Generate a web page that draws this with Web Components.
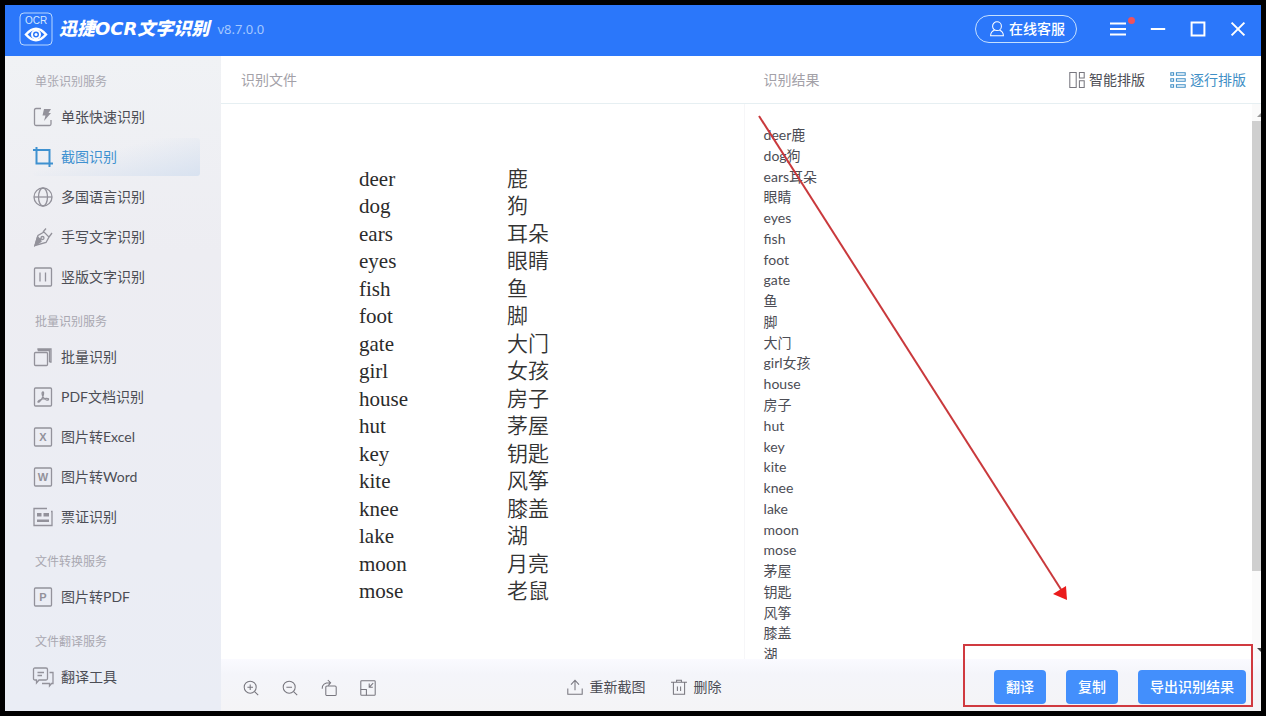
<!DOCTYPE html>
<html lang="zh-CN">
<head>
<meta charset="utf-8">
<title>迅捷OCR文字识别</title>
<style>
body {
  background: #000;
  box-sizing: border-box;
  color: #4c4d55;
  display: flex;
  font: 14px/20px Lato, "Noto Sans CJK SC", sans-serif;
  height: 100vh;
  margin: 0;
  padding: 5px;
}
</style>
</head>
<body>
<ocr-app>
  <ocr-titlebar slot="title" version="v8.7.0.0">迅捷OCR文字识别</ocr-titlebar>
  <ocr-sidebar slot="side">
    <nav-group label="单张识别服务">
      <nav-item icon="quick">单张快速识别</nav-item>
      <nav-item icon="crop" active>截图识别</nav-item>
      <nav-item icon="globe">多国语言识别</nav-item>
      <nav-item icon="pen">手写文字识别</nav-item>
      <nav-item icon="vertical">竖版文字识别</nav-item>
    </nav-group>
    <nav-group label="批量识别服务">
      <nav-item icon="batch">批量识别</nav-item>
      <nav-item icon="pdf">PDF文档识别</nav-item>
      <nav-item icon="excel">图片转Excel</nav-item>
      <nav-item icon="word">图片转Word</nav-item>
      <nav-item icon="ticket">票证识别</nav-item>
    </nav-group>
    <nav-group label="文件转换服务">
      <nav-item icon="topdf">图片转PDF</nav-item>
    </nav-group>
    <nav-group label="文件翻译服务">
      <nav-item icon="translate">翻译工具</nav-item>
    </nav-group>
  </ocr-sidebar>
  <ocr-panel heading="识别文件">
    <word-sheet></word-sheet>
    <tool-button slot="foot" icon="zoomin" label="放大"></tool-button>
    <tool-button slot="foot" icon="zoomout" label="缩小"></tool-button>
    <tool-button slot="foot" icon="rotate" label="旋转"></tool-button>
    <tool-button slot="foot" icon="fit" label="适应窗口"></tool-button>
    <tool-button slot="actions" icon="upload">重新截图</tool-button>
    <tool-button slot="actions" icon="trash">删除</tool-button>
  </ocr-panel>
  <ocr-panel heading="识别结果" divided>
    <tool-button slot="tools" icon="smart" tight>智能排版</tool-button>
    <tool-button slot="tools" icon="rows" tight active>逐行排版</tool-button>
    <result-list></result-list>
    <result-actions slot="actions"></result-actions>
    <hint-arrow slot="over"></hint-arrow>
  </ocr-panel>
</ocr-app>

<script>
const html = (strings, ...parts) => new DOMParser().parseFromString(
	parts.reduce((tpl, value, i) => `${tpl}${strings[i]}${value}`, '')
		.concat(strings[parts.length]), 'text/html').querySelector('template')

class Base extends HTMLElement {
	constructor(tpl) {
		super()
		this.attachShadow({mode: 'open'})
		this.shadowRoot.append(tpl.content.cloneNode(true))
	}
	$(sel) { return this.shadowRoot.querySelector(sel) }
}

// every icon is drawn on a 20x20 grid
const page = '<rect x="1.5" y="1" width="17" height="18" rx="1"/>'
const letter = ch => `${page}<text x="10" y="14" text-anchor="middle" font-family="Liberation Sans" font-size="11" font-weight="bold" fill="currentColor" stroke="none">${ch}</text>`
const icons = {
	quick: '<path d="M8 1.500H3Q1.500 1.500 1.500 3v14q0 1.500 1.500 1.500h13.500q1.500 0 1.500-1.500v-4"/><path d="M11 2h7l-2.500 4H18l-7 8 1.500-5.500H9.500z" fill="currentColor" stroke="none"/>',
	crop: '<g stroke-width="2"><path d="M0 3h16.500v17M3.500 0v16.500H20"/></g>',
	globe: '<circle cx="10" cy="10" r="9"/><ellipse cx="10" cy="10" rx="4.500" ry="9"/><path d="M1 10h18"/>',
	pen: '<path d="M2 18.500 5 8.500l6-3.500 5 5-3 5.500zM10 5l3-3.500M16 10l3-4M2 18.500l6-7"/><path d="M2 18.500 4.500 10l3 2.500.5 2z" fill="currentColor"/><circle cx="9.500" cy="11" r="1.500"/>',
	vertical: `${page}<path d="M7 5.500v9M12.500 5.500v9"/>`,
	batch: '<rect x="1.500" y="5.500" width="13" height="13" rx="1"/><path d="M5 3.500V2h13v13h-1.500M5 3.500h11.500V15"/>',
	pdf: `${page}<path d="M10 5c-1.500 0-1 3 .5 5.500S15 14 15.500 12.500s-3-1.500-6-.5-5 2-4.500 3 3.500-2 4.500-4.500S11 5 10 5z"/>`,
	excel: letter('X'),
	word: letter('W'),
	topdf: letter('P'),
	ticket: '<path d="M14 1.500H1v17h18V4.500h-1"/><path d="M4 6h4.500v3.500H4zM10.500 6H16v3.500h-5.500zM4 12.500h12V15H4z" fill="currentColor" stroke="none"/>',
	translate: '<path d="M2 1h11q1.500 0 1.500 1.500v9q0 1.500-1.500 1.500H6l-2.500 3v-3H2Q.500 13 .500 11.500v-9Q.500 1 2 1zM4.500 5.500H11M4.500 8.500H9M16.500 5.500H20v11h-1.500l-2 2.500v-2.500H9"/>',
	zoomin: '<circle cx="9" cy="9" r="7.500"/><path d="M14.500 14.500 19 19M9 5.500v7M5.500 9h7"/>',
	zoomout: '<circle cx="9" cy="9" r="7.500"/><path d="M14.500 14.500 19 19M5.500 9h7"/>',
	rotate: '<rect x="6" y="7.500" width="13" height="12" rx="1.500"/><path d="M1.500 11Q1 3 12 3.500M8.500 0 12 3.500 9 7"/>',
	fit: '<rect x="1" y="1" width="18" height="18" rx="1"/><path d="M1 12h7v7M16.500 4 12 8.500M11.500 4.500v4.500H16"/>',
	upload: '<path d="M1 12v7h18v-7M10 14V2M5 7l5-5.500L15 7"/>',
	trash: '<path d="M0 4h20M7 4V1.500h6V4M3 4v15h14V4M8 9.500V15M12 9.500V15"/>',
	smart: '<path d="M1 .5h8v19H1zM13 .5h6v7h-6zM13 11h6v8.500h-6z"/>',
	rows: '<path d="M1 1h3.500v3H1zM1 8.500h3.500v3H1zM1 16h3.500v3H1zM8 1h11v3H8zM8 8.500h11v3H8zM8 16h11v3H8z"/>',
	user: '<circle cx="10" cy="6.500" r="5.500"/><path d="M7 11.500Q2 13 2 18.500h16q0-5.500-5-7"/>',
	menu: '<path d="M0 3h20M0 10h20M0 17h20" stroke-width="2.500"/>',
	min: '<path d="M1 10h18" stroke-width="2.500"/>',
	max: '<path d="M2 2h16v16H2z" stroke-width="2.500"/>',
	close: '<path d="M2 2l16 16M18 2 2 18" stroke-width="2.500"/>'
}

const iconTpl = html`<template>
<style>
:host { display: block; flex: none; height: 16px; width: 16px; }
svg { display: block; fill: none; height: 100%; overflow: visible; stroke: currentColor; stroke-width: 1.300; width: 100%; }
</style>
<svg viewBox="0 0 20 20" aria-hidden="true"></svg>
</template>`
customElements.define('ui-icon', class extends Base {
	static get observedAttributes() { return ['name'] }

	constructor() { super(iconTpl) }
	attributeChangedCallback(attr, old, name) {
		this.$('svg').innerHTML = icons[name] || ''
	}
})

const appTpl = html`<template>
<style>
:host {
  background: #fff;
  display: grid;
  flex: 1;
  grid-template: 51px minmax(0, 1fr) / 216px 101fr 100fr;
  min-width: 0;
  overflow: hidden;
}
slot[name=title]::slotted(*) { grid-column: 1 / -1; }
</style>
<slot name="title"></slot><slot name="side"></slot><slot></slot>
</template>`
customElements.define('ocr-app', class extends Base {
	constructor() { super(appTpl) }
})

const titleTpl = html`<template>
<style>
:host {
  align-items: center;
  background: #2b77fa;
  color: #fff;
  display: flex;
  padding: 0 15px 3px 14px;
}
.logo { flex: none; height: 34px; width: 34px; }
h1 {
  font: italic 900 18px/24px "DejaVu Sans", "Noto Sans CJK SC", sans-serif;
  margin: 0 8px 0 6px;
  white-space: nowrap;
}
.ver { color: #a4c8ff; flex: 1; font: 13px/20px "Noto Sans", sans-serif; }
button { background: none; border: 0; color: inherit; font: inherit; padding: 0; }
.service {
  align-items: center;
  border: 1px solid #c5e0ff;
  border-radius: 14px;
  display: flex;
  font-weight: 500;
  gap: 4px;
  height: 28px;
  margin-right: 33px;
  padding: 0 11px 0 13px;
}
.win { display: flex; gap: 24px; }
.win button { position: relative; }
.dot { background: #f0525c; border-radius: 50%; height: 7px; position: absolute; right: -9px; top: -4px; width: 7px; }
</style>
<svg class="logo" viewBox="0 0 34 34" fill="none" stroke="#fff" aria-hidden="true">
  <rect x="1" y="1" width="32" height="32" rx="4" stroke="#b9d8ff"/>
  <text x="17" y="12" text-anchor="middle" font-family="Liberation Sans" font-size="10" fill="#d4e7ff" stroke="none">OCR</text>
  <path d="M7 22.500Q17 11 27 22.500 17 34 7 22.500z" stroke-width="2.500"/>
  <circle cx="17" cy="22.500" r="4" stroke-width="2"/>
  <circle cx="17" cy="22.500" r="1.500" fill="#fff" stroke="none"/>
</svg>
<h1><slot></slot></h1>
<span class="ver"></span>
<button class="service"><ui-icon name="user"></ui-icon>在线客服</button>
<div class="win">
  <button aria-label="菜单"><ui-icon name="menu"></ui-icon><i class="dot"></i></button>
  <button aria-label="最小化"><ui-icon name="min"></ui-icon></button>
  <button aria-label="最大化"><ui-icon name="max"></ui-icon></button>
  <button aria-label="关闭"><ui-icon name="close"></ui-icon></button>
</div>
</template>`
customElements.define('ocr-titlebar', class extends Base {
	constructor() { super(titleTpl) }
	connectedCallback() {
		this.$('.ver').textContent = this.getAttribute('version')
	}
})

const sideTpl = html`<template>
<style>
:host {
  background: linear-gradient(to bottom, #f0f2f5, #ededf2 30%, #eaedf5);
  display: block;
  padding: 2px 21px 0 28px;
}
</style>
<nav><slot></slot></nav>
</template>`
customElements.define('ocr-sidebar', class extends Base {
	constructor() { super(sideTpl) }
})

const groupTpl = html`<template>
<style>
:host { display: block; }
h2 { color: #a9a8b1; font: inherit; font-size: 12px; line-height: 32px; margin: 0; padding: 8px 0 0 2px; }
</style>
<h2></h2>
<slot></slot>
</template>`
customElements.define('nav-group', class extends Base {
	constructor() { super(groupTpl) }
	connectedCallback() {
		this.$('h2').textContent = this.getAttribute('label')
	}
})

const itemTpl = html`<template>
<style>
:host { color: #4c4d55; display: block; height: 40px; }
a {
  align-items: center;
  color: inherit;
  display: flex;
  gap: 8px;
  height: 38px;
  text-decoration: none;
}
ui-icon { color: #93929b; height: 20px; width: 20px; }
:host([active]) { color: #3f91d0; }
:host([active]) a { background: linear-gradient(165deg, #edeff400 40%, #d8e2f0); border-radius: 3px; }
:host([active]) ui-icon { color: inherit; }
</style>
<a href="#"><ui-icon></ui-icon><span><slot></slot></span></a>
</template>`
customElements.define('nav-item', class extends Base {
	constructor() {
		super(itemTpl)
		this.$('ui-icon').setAttribute('name', this.getAttribute('icon'))
	}
})

const panelTpl = html`<template>
<style>
:host {
  display: grid;
  grid-template-rows: 48px minmax(0, 1fr) 52px;
  min-width: 0;
  position: relative;
}
header, footer { align-items: center; display: flex; }
header { border-bottom: 1px solid #e6eff2; padding: 0 15px 0 20px; }
h2 { color: #a3a1a8; flex: 1; font: inherit; margin: 0; }
.tools { display: flex; gap: 25px; }
footer { background: linear-gradient(to bottom, #fafaff, #f4f5fa 30%, #f4f4f6); padding: 4px 15px 0 22px; }
.foot { display: flex; flex: 1; gap: 23px; }
.actions { display: flex; gap: 25px; }
:host(:not([divided])) footer { padding-right: 22px; }
:host([divided]) main { box-shadow: inset 1px 0 #f6f6f8; }
</style>
<header><h2></h2><div class="tools"><slot name="tools"></slot></div></header>
<main><slot></slot></main>
<footer><div class="foot"><slot name="foot"></slot></div><div class="actions"><slot name="actions"></slot></div></footer>
<slot name="over"></slot>
</template>`
customElements.define('ocr-panel', class extends Base {
	constructor() { super(panelTpl) }
	connectedCallback() {
		this.$('h2').textContent = this.getAttribute('heading')
	}
})

const toolTpl = html`<template>
<style>
:host { color: #4c4d55; display: block; }
button {
  align-items: center;
  background: none;
  border: 0;
  color: inherit;
  display: flex;
  font: inherit;
  gap: 7px;
  padding: 0;
}
ui-icon { color: #77767e; }
:host([tight]) button { gap: 4px; }
:host([active]), :host([active]) ui-icon { color: #3f8fc6; }
:host([label]) button { height: 22px; padding-top: 2px; }
:host([label]) button span { display: none; }
</style>
<button><ui-icon></ui-icon><span><slot></slot></span></button>
</template>`
customElements.define('tool-button', class extends Base {
	constructor() {
		super(toolTpl)
		this.$('ui-icon').setAttribute('name', this.getAttribute('icon'))
		if (this.hasAttribute('label'))
			this.$('button').setAttribute('aria-label', this.getAttribute('label'))
	}
})

const words = [
	['deer', '鹿'], ['dog', '狗'], ['ears', '耳朵'], ['eyes', '眼睛'],
	['fish', '鱼'], ['foot', '脚'], ['gate', '大门'], ['girl', '女孩'],
	['house', '房子'], ['hut', '茅屋'], ['key', '钥匙'], ['kite', '风筝'],
	['knee', '膝盖'], ['lake', '湖'], ['moon', '月亮'], ['mose', '老鼠']
]
const sheetTpl = html`<template>
<style>
:host { display: block; padding: 61px 0 0 138px; }
table {
  border-collapse: collapse;
  color: #2b2b2b;
  font: 21px/24px "Liberation Serif", "Noto Sans CJK SC", serif;
  height: 440px;
}
td { padding: 0; }
td:first-child { width: 148px; }
td:last-child { color: #333; font-weight: 350; }
</style>
<table><tbody>${words.map(([en, zh]) => `<tr><td>${en}</td><td>${zh}</td></tr>`).join('')}</tbody></table>
</template>`
customElements.define('word-sheet', class extends Base {
	constructor() { super(sheetTpl) }
})

const lines = ['deer鹿', 'dog狗', 'ears耳朵', '眼睛', 'eyes', 'fish', 'foot', 'gate', '鱼', '脚',
	'大门', 'girl女孩', 'house', '房子', 'hut', 'key', 'kite', 'knee', 'lake', 'moon', 'mose',
	'茅屋', '钥匙', '风筝', '膝盖', '湖']
const resultTpl = html`<template>
<style>
:host { display: flex; height: 100%; overflow: hidden; }
ul {
  display: grid;
  flex: 1;
  grid-auto-rows: 1fr;
  height: 540px;
  list-style: none;
  margin: 0;
  padding: 21px 20px 0;
}
.bar { align-items: flex-end; background: #fafafa; display: flex; flex-direction: column; width: 9px; }
.up, .down { border: 4px solid transparent; border-right-width: 0; }
.up { border-bottom-color: #999; margin: 5px 0 4px; }
.down { border-top-color: #444; border-bottom: 0; margin-bottom: 7px; }
.thumb { background: #cfcfcf; height: 450px; width: 100%; }
.rest { flex: 1; }
</style>
<ul>${lines.map(line => `<li>${line}</li>`).join('')}</ul>
<div class="bar"><i class="up"></i><div class="thumb"></div><div class="rest"></div><i class="down"></i></div>
</template>`
customElements.define('result-list', class extends Base {
	constructor() { super(resultTpl) }
})

const actionsTpl = html`<template>
<style>
:host { display: flex; gap: 20px; position: relative; }
button {
  background: #438ffc;
  border: 0;
  border-radius: 4px;
  color: #fff;
  font: inherit;
  font-weight: 500;
  height: 34px;
  padding: 0 12px;
}
.frame {
  border: 2px solid #d03a40;
  inset: -26px -7px -3px -31px;
  pointer-events: none;
  position: absolute;
}
</style>
<button>翻译</button><button>复制</button><button>导出识别结果</button>
<div class="frame"></div>
</template>`
customElements.define('result-actions', class extends Base {
	constructor() { super(actionsTpl) }
})

const arrowTpl = html`<template>
<style>
:host { height: 486px; left: 14px; pointer-events: none; position: absolute; top: 59px; width: 310px; }
svg { display: block; }
</style>
<svg width="310" height="486" viewBox="0 0 310 486" aria-hidden="true">
  <path d="M1 1 304 476" fill="none" stroke="#c9393c" stroke-width="2"/>
  <path d="M309 485 295 479 308 471z" fill="#ea1c1c"/>
</svg>
</template>`
customElements.define('hint-arrow', class extends Base {
	constructor() { super(arrowTpl) }
})
</script>
</body>
</html>
